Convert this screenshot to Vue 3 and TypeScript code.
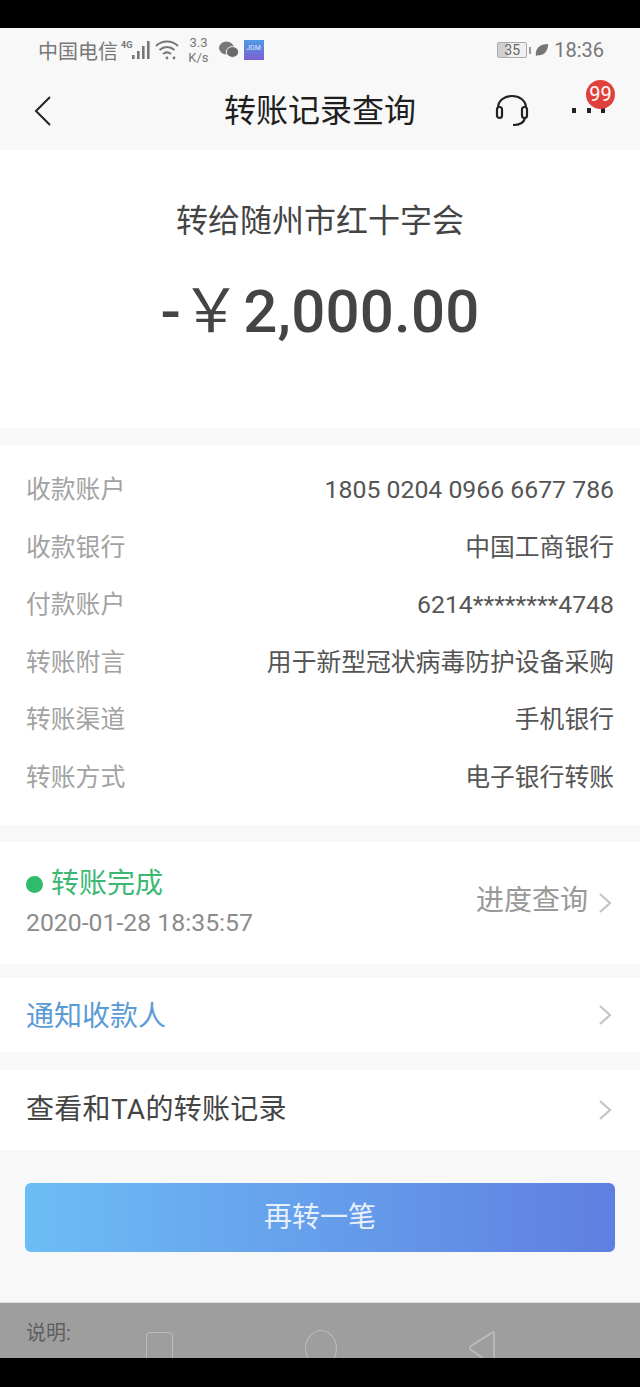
<template>
  <div class="phone">
    <div class="black-bar top"></div>

    <header class="head">
      <div class="status">
        <div class="status-left">
          <span class="carrier">中国电信</span>
          <span class="net">4G</span>
          <svg class="signal" width="19" height="20" viewBox="0 0 19 20">
            <rect x="1" y="15" width="2.6" height="4" fill="#777" />
            <rect x="6" y="11" width="2.6" height="8" fill="#777" />
            <rect x="11" y="6" width="2.6" height="13" fill="#777" />
            <rect x="16" y="1" width="2.6" height="18" fill="#777" />
          </svg>
          <svg class="wifi" width="24" height="20" viewBox="0 0 24 20" fill="none" stroke="#777" stroke-width="2">
            <path d="M1 6 C7 0 17 0 23 6" />
            <path d="M4.5 10 C9 6 15 6 19.5 10" />
            <path d="M8 14 C10.5 12 13.5 12 16 14" />
            <circle cx="12" cy="18" r="1.4" fill="#777" stroke="none" />
            <circle cx="19" cy="18" r="1.4" fill="#777" stroke="none" />
          </svg>
          <span class="speed">3.3<br />K/s</span>
          <svg class="wechat" width="20" height="18" viewBox="0 0 20 18">
            <ellipse cx="7.5" cy="7" rx="7.5" ry="6.5" fill="#777" />
            <ellipse cx="13.5" cy="11" rx="6.2" ry="5.4" fill="#6a6a6a" stroke="#f8f8f8" stroke-width="1" />
          </svg>
          <span class="app-tile">JDM</span>
        </div>
        <div class="status-right">
          <span class="battery"><span class="battery-num">35</span></span>
          <i class="battery-tip"></i>
          <svg width="14" height="14" viewBox="0 0 15 15">
            <path d="M1 14 C0 6 5 1 14 1 C14 9 9 14 3 13 Z" fill="#777" />
          </svg>
          <span class="clock">18:36</span>
        </div>
      </div>

      <nav class="nav">
        <svg class="back" width="18" height="32" viewBox="0 0 18 32" fill="none" stroke="#222" stroke-width="2">
          <path d="M16 2 L2 16 L16 30" />
        </svg>
        <h1 class="title">转账记录查询</h1>
        <svg class="headset" width="34" height="34" viewBox="0 0 34 34" fill="none" stroke="#222" stroke-width="2.2">
          <path d="M3 15 C3 -1 31 -1 31 15" />
          <rect x="2" y="14" width="5" height="11" rx="2.5" />
          <rect x="27" y="14" width="5" height="11" rx="2.5" />
          <path d="M30 25 C29 30 25 32 18 32" />
        </svg>
        <div class="more">
          <i class="dot"></i><i class="dot"></i><i class="dot"></i>
          <span class="badge">99</span>
        </div>
      </nav>
    </header>

    <section class="card summary">
      <p class="payee">转给随州市红十字会</p>
      <p class="amount"><span class="minus">-</span><span class="yen">￥</span>2,000.00</p>
    </section>

    <section class="card details">
      <div v-for="row in rows" :key="row.label" class="row">
        <span class="row-label">{{ row.label }}</span>
        <span class="row-value">{{ row.value }}</span>
      </div>
    </section>

    <section class="card state">
      <div>
        <div class="state-line"><i class="green-dot"></i>转账完成</div>
        <div class="state-time">2020-01-28 18:35:57</div>
      </div>
      <div class="state-link">
        <span class="state-link-text">进度查询</span>
        <svg class="chev" width="14" height="22" viewBox="0 0 14 22" fill="none" stroke="#c4c4c4" stroke-width="2.2"><path d="M2 2 L12 11 L2 20" /></svg>
      </div>
    </section>

    <section class="card link-row notify">
      <span class="notify-text">通知收款人</span>
      <svg class="chev" width="14" height="22" viewBox="0 0 14 22" fill="none" stroke="#c4c4c4" stroke-width="2.2"><path d="M2 2 L12 11 L2 20" /></svg>
    </section>

    <section class="card link-row records">
      <span class="records-text">查看和TA的转账记录</span>
      <svg class="chev" width="14" height="22" viewBox="0 0 14 22" fill="none" stroke="#c4c4c4" stroke-width="2.2"><path d="M2 2 L12 11 L2 20" /></svg>
    </section>

    <div class="action">
      <button class="again" type="button"><span class="again-text">再转一笔</span></button>
    </div>

    <footer class="dim">
      <p class="note">说明:</p>
      <div class="softkeys">
        <i class="key-square"></i>
        <i class="key-circle"></i>
        <svg width="28" height="36" viewBox="0 0 28 36" fill="none" stroke="#bdbdbd" stroke-width="1.6"><path d="M25 2 Q26 1 26 4 L26 32 Q26 35 24 34 L3 20 Q1 18 3 16 Z" /></svg>
      </div>
    </footer>

    <div class="black-bar bottom"></div>
  </div>
</template>

<script setup lang="ts">
interface DetailRow {
  label: string
  value: string
}

const rows: DetailRow[] = [
  { label: '收款账户', value: '1805 0204 0966 6677 786' },
  { label: '收款银行', value: '中国工商银行' },
  { label: '付款账户', value: '6214********4748' },
  { label: '转账附言', value: '用于新型冠状病毒防护设备采购' },
  { label: '转账渠道', value: '手机银行' },
  { label: '转账方式', value: '电子银行转账' }
]
</script>

<style>
html, body {
  margin: 0;
  background: #000;
}
</style>

<style scoped>
.phone {
  width: 640px;
  height: 1387px;
  overflow: hidden;
  display: flex;
  flex-direction: column;
  background: #f8f8f8;
  font-family: Roboto, "Noto Sans CJK SC", sans-serif;
}

.black-bar {
  flex: none;
  background: #000;
}

.black-bar.top {
  height: 28px;
}

.black-bar.bottom {
  height: 29px;
}

.head {
  flex: none;
  height: 122px;
  box-sizing: border-box;
  background: #f8f8f8;
}

.status {
  display: flex;
  justify-content: space-between;
  align-items: center;
  height: 44px;
  padding: 0 36px 0 38px;
  color: #777;
}

.status-left,
.status-right {
  display: flex;
  align-items: center;
}

.carrier {
  font-size: 20px;
}

.net {
  font-size: 9px;
  font-weight: 700;
  margin: -10px 0 0 3px;
}

.signal {
  margin-left: -1px;
}

.wifi {
  margin-left: 5px;
}

.speed {
  font-size: 13px;
  line-height: 15px;
  margin-left: 9px;
  text-align: center;
}

.wechat {
  margin-left: 10px;
}

.app-tile {
  width: 20px;
  height: 20px;
  margin-left: 5px;
  background: linear-gradient(180deg, #4f9ae8, #7a5fd0);
  color: #d8ecff;
  font-size: 7px;
  line-height: 16px;
  text-align: center;
  overflow: hidden;
}

.battery {
  display: block;
  width: 30px;
  height: 16px;
  box-sizing: border-box;
  border: 1px solid #aaa;
  border-radius: 2px;
  background: linear-gradient(90deg, #d0d0d0 35%, #f0f0f0 35%);
  text-align: center;
}

.battery-num {
  display: block;
  font-size: 14px;
  line-height: 14px;
  color: #666;
}

.battery-tip {
  width: 2px;
  height: 7px;
  margin: 0 4px 0 2px;
  background: #999;
}

.clock {
  font-size: 20px;
  margin-left: 5px;
  color: #777;
}

.nav {
  position: relative;
  height: 78px;
}

.back {
  position: absolute;
  left: 34px;
  top: 23px;
}

.title {
  margin: 0;
  text-align: center;
  font-size: 32px;
  font-weight: 400;
  line-height: 78px;
  color: #1e1e1e;
}

.headset {
  position: absolute;
  left: 495px;
  top: 21px;
}

.more {
  position: absolute;
  left: 572px;
  top: 36px;
  display: flex;
  gap: 10.5px;
}

.dot {
  width: 4px;
  height: 5px;
  background: #222;
}

.badge {
  position: absolute;
  left: 14px;
  top: -28px;
  width: 29px;
  height: 29px;
  border-radius: 50%;
  background: #e0413c;
  color: #fff;
  font-size: 20px;
  line-height: 29px;
  text-align: center;
}

.card {
  flex: none;
  background: #fff;
}

.summary {
  height: 278px;
  text-align: center;
}

.payee {
  margin: 0;
  padding-top: 51px;
  font-size: 32px;
  line-height: 40px;
  color: #444;
}

.amount {
  margin: 36px 0 0;
  font-size: 60px;
  line-height: 70px;
  color: #444;
  font-weight: 500;
  letter-spacing: 0.2px;
}

.yen {
  font-size: 60px;
  font-weight: 400;
  margin-right: 2px;
}

.details {
  margin-top: 17px;
  height: 380px;
  box-sizing: border-box;
  padding: 18px 26px 0;
}

.row {
  display: flex;
  justify-content: space-between;
  align-items: baseline;
  height: 57.6px;
  line-height: 54px;
  font-size: 24.8px;
}

.row-label {
  color: #a2a2a2;
}

.row-value {
  color: #555;
}

.state {
  margin-top: 17px;
  height: 122px;
  box-sizing: border-box;
  padding: 0 28px 0 26px;
  display: flex;
  justify-content: space-between;
  align-items: center;
}

.state-line {
  display: flex;
  align-items: center;
  font-size: 28px;
  line-height: 40px;
  color: #3db874;
}

.green-dot {
  width: 17px;
  height: 17px;
  border-radius: 50%;
  margin-right: 8px;
  background: #2fbc6a;
}

.state-time {
  font-size: 24.8px;
  line-height: 38px;
  color: #8c8c8c;
}

.state-link {
  display: flex;
  align-items: center;
  gap: 10px;
  font-size: 28px;
  color: #999;
}

.state-link-text {
  margin-top: -10px;
}

.link-row {
  display: flex;
  justify-content: space-between;
  align-items: center;
  box-sizing: border-box;
  padding: 0 28px 0 26px;
  font-size: 28px;
  color: #444;
}

.notify {
  margin-top: 14px;
  height: 74px;
}

.notify-text {
  margin-top: -2px;
  color: #5b9bd5;
}

.records {
  margin-top: 18px;
  height: 80px;
}

.records-text {
  margin-top: -6px;
  letter-spacing: 0.3px;
}

.action {
  flex: none;
  height: 152px;
  box-sizing: border-box;
  padding: 33px 25px 0;
}

.again {
  display: block;
  width: 100%;
  height: 69px;
  border: 0;
  border-radius: 6px;
  background: linear-gradient(90deg, #6cbdf6, #5f7fe0);
  color: #e6f0fb;
  font-family: inherit;
  font-size: 28px;
}

.again-text {
  display: block;
  margin-top: -6px;
}

.dim {
  position: relative;
  flex: 1;
  min-height: 0;
  overflow: hidden;
  background: #9e9e9e;
  border-top: 1px solid #ddd;
}

.note {
  margin: 16px 0 0 26px;
  font-size: 20px;
  line-height: 28px;
  color: #5e5e5e;
}

.softkeys {
  position: absolute;
  left: 146px;
  top: 27px;
  width: 350px;
  display: flex;
  justify-content: space-between;
  align-items: flex-start;
}

.key-square {
  width: 25px;
  height: 30px;
  margin-top: 2px;
  border: 1.6px solid #bdbdbd;
  border-radius: 4px;
}

.key-circle {
  width: 30px;
  height: 35px;
  border: 1.6px solid #bdbdbd;
  border-radius: 50%;
}
</style>
